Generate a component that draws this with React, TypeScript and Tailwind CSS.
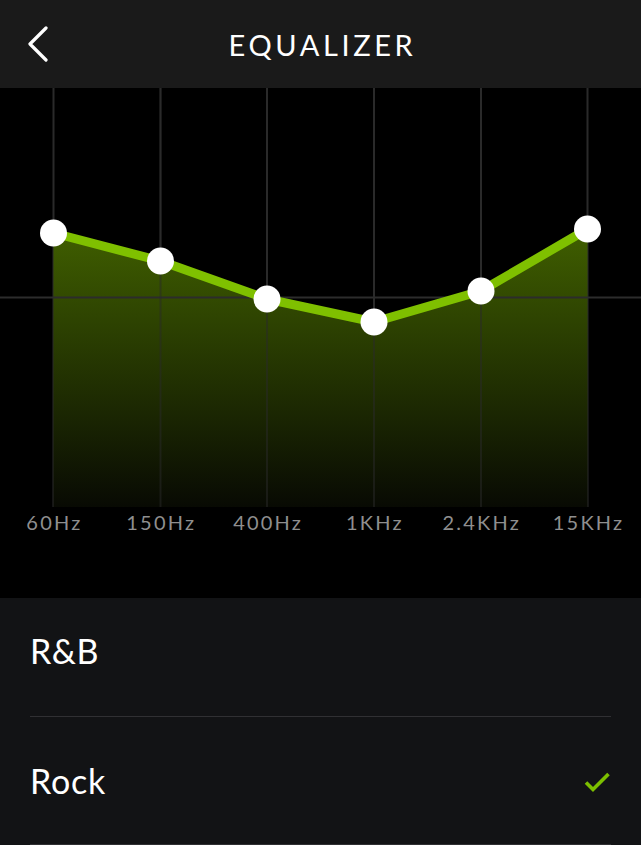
import React from "react";

const xs = [53.5, 160.5, 267, 374, 481, 587.5];
const ys = [145, 173, 211, 234, 203, 141];
const labels = ["60Hz", "150Hz", "400Hz", "1KHz", "2.4KHz", "15KHz"];
const H = 419;

function Chart() {
  const pts = xs.map((x, i) => `${x},${ys[i]}`).join(" ");
  const area = `${xs[0]},${H} ${pts} ${xs[5]},${H}`;
  return (
    <svg width="641" height={H} viewBox={`0 0 641 ${H}`} className="block">
      <defs>
        <linearGradient id="eqfill2" x1="0" y1="141" x2="0" y2={H} gradientUnits="userSpaceOnUse">
          <stop offset="0" stopColor="#405f00" />
          <stop offset="1" stopColor="#080a03" />
        </linearGradient>
      </defs>
      {xs.map((x) => (
        <line key={x} x1={x} y1={0} x2={x} y2={H} stroke="#2a2a2a" strokeWidth="2" />
      ))}
      <polygon points={area} fill="url(#eqfill2)" />
      <line x1={0} y1={209.5} x2={641} y2={209.5} stroke="#2c2c2c" strokeWidth="2" />
      {xs.slice(1, 5).map((x) => (
        <line key={"v" + x} x1={x} y1={0} x2={x} y2={H} stroke="#2a2a2a" strokeOpacity="0.5" strokeWidth="2" />
      ))}
      <polyline points={pts} fill="none" stroke="#7fc000" strokeWidth="9" strokeLinejoin="round" />
      {xs.map((x, i) => (
        <circle key={"c" + x} cx={x} cy={ys[i]} r="13.5" fill="#ffffff" />
      ))}
    </svg>
  );
}

export default function App() {
  return (
    <div className="w-[641px] h-[845px] overflow-hidden bg-black" style={{ fontFamily: "Lato, 'Noto Sans', sans-serif" }}>
      <header className="h-[88px] bg-[#1a1a1a] grid grid-cols-[1fr_auto_1fr] items-center">
        <div className="pl-[27px] flex items-center">
          <svg width="22" height="36" viewBox="0 0 22 36">
            <polyline points="19,2 3,18 19,34" fill="none" stroke="#ffffff" strokeWidth="3.2" strokeLinecap="round" strokeLinejoin="round" />
          </svg>
        </div>
        <h1 className="text-white text-[29px] tracking-[3.6px] font-normal leading-none pl-[4px]">EQUALIZER</h1>
        <div />
      </header>
      <section className="h-[510px] bg-black flex flex-col">
        <Chart />
        <div className="grid grid-cols-6 mt-[2px]">
          {labels.map((l) => (
            <div key={l} className="text-center text-[#8f8f8f] text-[20px] tracking-[2.2px] leading-[26px] pl-[2px]">
              {l}
            </div>
          ))}
        </div>
      </section>
      <section className="h-[247px] bg-[#121315] px-[30px] text-white">
        <div className="h-[119px] border-b border-[#303033] flex items-center pb-[12px]">
          <span className="text-[34px] leading-none tracking-[0.5px]">R&amp;B</span>
        </div>
        <div className="h-[128px] border-b border-[#303033] flex items-center justify-between">
          <span className="text-[34px] leading-none tracking-[0.8px]">Rock</span>
          <svg width="28" height="24" viewBox="0 0 28 24" className="mr-[-1px] mt-[2px]">
            <polyline points="2,12.5 9,19.5 24.5,4" fill="none" stroke="#7cbf00" strokeWidth="3.6" />
          </svg>
        </div>
      </section>
    </div>
  );
}
